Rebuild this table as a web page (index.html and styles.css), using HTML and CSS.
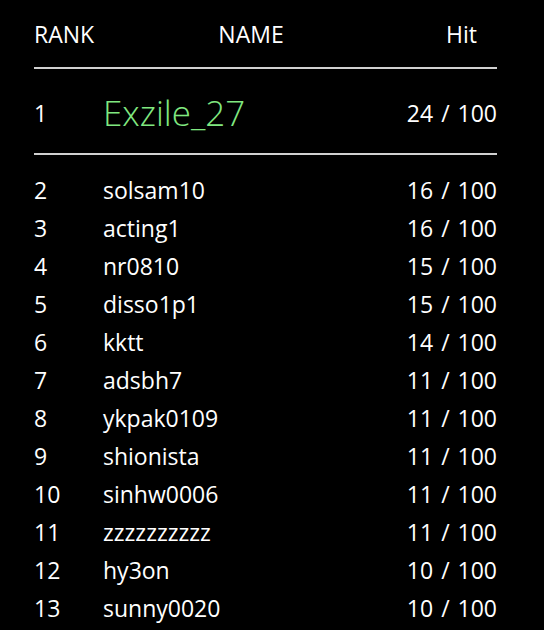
FILE: index.html
```html
<!DOCTYPE html>
<html>
<head>
<meta charset="utf-8">
<link rel="stylesheet" href="styles.css">
</head>
<body>
<div class="board">
  <div class="row head">
    <span class="rank">RANK</span>
    <span class="name">NAME</span>
    <span class="hit">Hit</span>
  </div>
  <div class="row top">
    <span class="rank">1</span>
    <span class="name">Exzile_27</span>
    <span class="hit">24 / 100</span>
  </div>
  <div class="list">
    <div class="row"><span class="rank">2</span><span class="name">solsam10</span><span class="hit">16 / 100</span></div>
    <div class="row"><span class="rank">3</span><span class="name">acting1</span><span class="hit">16 / 100</span></div>
    <div class="row"><span class="rank">4</span><span class="name">nr0810</span><span class="hit">15 / 100</span></div>
    <div class="row"><span class="rank">5</span><span class="name">disso1p1</span><span class="hit">15 / 100</span></div>
    <div class="row"><span class="rank">6</span><span class="name">kktt</span><span class="hit">14 / 100</span></div>
    <div class="row"><span class="rank">7</span><span class="name">adsbh7</span><span class="hit">11 / 100</span></div>
    <div class="row"><span class="rank">8</span><span class="name">ykpak0109</span><span class="hit">11 / 100</span></div>
    <div class="row"><span class="rank">9</span><span class="name">shionista</span><span class="hit">11 / 100</span></div>
    <div class="row"><span class="rank">10</span><span class="name">sinhw0006</span><span class="hit">11 / 100</span></div>
    <div class="row"><span class="rank">11</span><span class="name">zzzzzzzzzz</span><span class="hit">11 / 100</span></div>
    <div class="row"><span class="rank">12</span><span class="name">hy3on</span><span class="hit">10 / 100</span></div>
    <div class="row"><span class="rank">13</span><span class="name">sunny0020</span><span class="hit">10 / 100</span></div>
  </div>
</div>
</body>
</html>
```
FILE: styles.css
```css
html, body {
  margin: 0;
  background: #000;
  overflow: hidden;
}
body {
  color: #fff;
  font-family: "Segoe UI", "Open Sans", sans-serif;
  font-size: 23px;
}
.board {
  width: 463px;
  margin-left: 34px;
  padding-top: 18px;
}
.row {
  display: grid;
  grid-template-columns: 69px 296px 98px;
  align-items: center;
  height: 38px;
  white-space: nowrap;
}
.row .hit { text-align: right; word-spacing: 2px; }
.head {
  height: 30px;
  padding-bottom: 19px;
  border-bottom: 2px solid #d0d0d0;
}
.head .name { text-align: center; }
.head .hit { padding-right: 20px; }
.top {
  height: 81px;
  padding-top: 3px;
  border-bottom: 2px solid #d0d0d0;
}
.top .name {
  color: #80e880;
  font-size: 35px;
  font-weight: 300;
}
.list {
  padding-top: 16px;
}
```
